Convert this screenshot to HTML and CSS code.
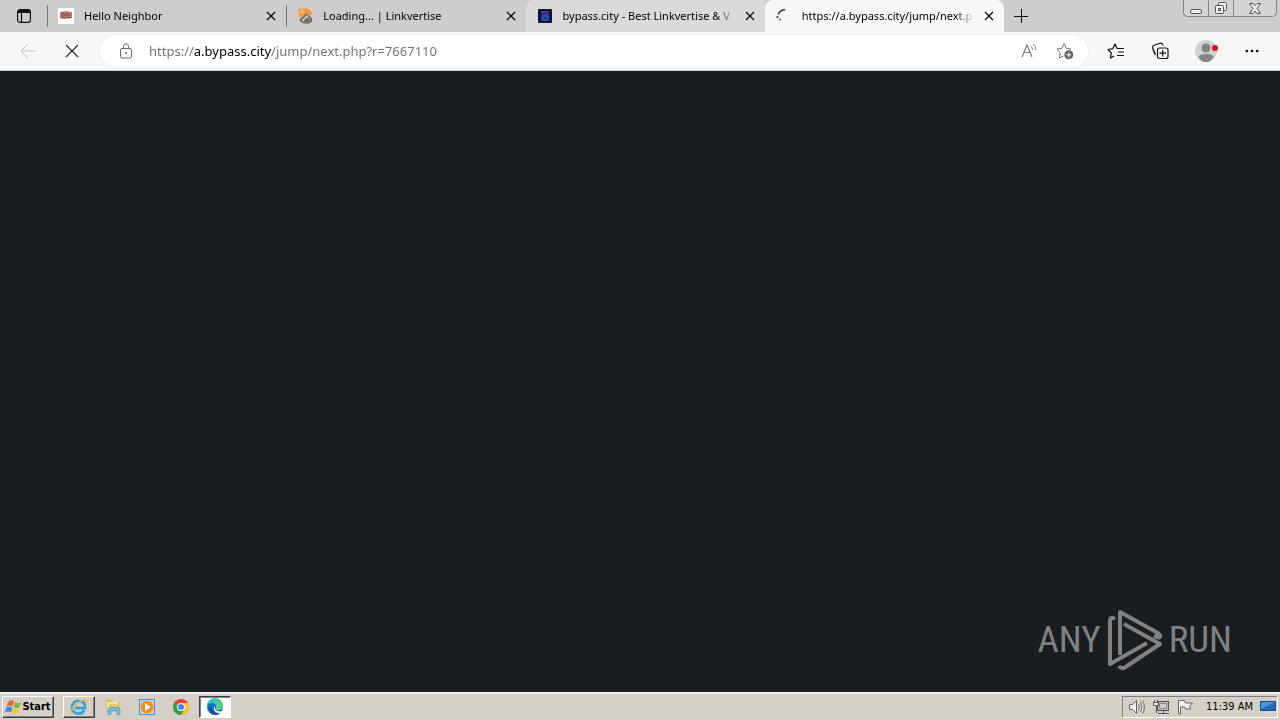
FILE: index.html
```html
<!DOCTYPE html>
<html lang="en">
<head>
<meta charset="utf-8">
<title>Browser on desktop</title>
<link rel="stylesheet" href="styles.css">
</head>
<body>
<header class="tabstrip">
  <button class="tab-actions" aria-label="Tab actions">
    <svg width="16" height="16" viewBox="0 0 16 16"><rect x="1.6" y="1.6" width="12.8" height="12.8" rx="2.4" fill="none" stroke="#111" stroke-width="1.2"/><path d="M1.5 5V4Q1.5 1.5 4 1.5h8q2.500 0 2.500 2.500v1z" fill="#111"/><path d="M5.500 5v9" stroke="#111" stroke-width="1.200"/></svg>
  </button>
  <nav class="tabs" aria-label="Tabs">
    <div class="tab divided">
      <svg class="favicon" width="16" height="16" viewBox="0 0 16 16"><rect width="16" height="16" fill="#fff"/><path d="M2 4l6-1 6 1v6l-6 1-6-1z" fill="#c48379"/><path d="M3 5h3v2H4v2h3M8 5h2v3H8zM12 5v3M9 9.500h4" fill="none" stroke="#8a4a48"/><path d="M3 10h4M6 7h2" stroke="#66707a"/></svg>
      <a class="title" href="#">Hello Neighbor</a>
      <button class="close" aria-label="Close tab"><svg width="10" height="10" viewBox="0 0 10 10"><path d="M1 1l8 8M9 1L1 9" stroke="#111" stroke-width="1.400"/></svg></button>
    </div>
    <div class="tab divided">
      <svg class="favicon" width="16" height="16" viewBox="0 0 16 16"><path d="M1 1l6-.5 5 .5 3 4-2 3-4-3-6 5-1-3z" fill="#f5913b"/><path d="M2 2l4-1 2 3-4 3z" fill="#ffb35f"/><path d="M2 12l7-7 6 5v4l-4 2-6-1z" fill="#77746c"/><path d="M5 13l5-5 1 2" stroke="#d9d6ce" stroke-width="1.200" fill="none"/></svg>
      <a class="title" href="#">Loading... | Linkvertise</a>
      <button class="close" aria-label="Close tab"><svg width="10" height="10" viewBox="0 0 10 10"><path d="M1 1l8 8M9 1L1 9" stroke="#111" stroke-width="1.400"/></svg></button>
    </div>
    <div class="tab hovered">
      <svg class="favicon" width="16" height="16" viewBox="0 0 16 16"><rect x="1" y="1" width="14" height="14" rx="1" fill="#11152f"/><path d="M4 3h7l1 4H5z" fill="#4a35a0"/><path d="M5 7h6q3 3 0 6H6l-2-2z" fill="#244eb5"/><path d="M6 5.500h3M7 10h3" stroke="#11152f"/></svg>
      <a class="title" href="#">bypass.city - Best Linkvertise &amp; V</a>
      <button class="close" aria-label="Close tab"><svg width="10" height="10" viewBox="0 0 10 10"><path d="M1 1l8 8M9 1L1 9" stroke="#111" stroke-width="1.400"/></svg></button>
    </div>
    <div class="tab active">
      <svg class="favicon" width="16" height="16" viewBox="0 0 16 16"><path d="M9 1.800Q4 2 2.200 6.500" fill="none" stroke="#555" stroke-width="2"/><path d="M1.500 8v2M3.500 11l1 1" fill="none" stroke="#555" stroke-width="2"/></svg>
      <a class="title" href="#">https://a.bypass.city/jump/next.p</a>
      <button class="close" aria-label="Close tab"><svg width="10" height="10" viewBox="0 0 10 10"><path d="M1 1l8 8M9 1L1 9" stroke="#111" stroke-width="1.400"/></svg></button>
    </div>
  </nav>
  <button class="new-tab" aria-label="New tab"><svg width="14" height="14" viewBox="0 0 14 14"><path d="M0 7.500h14M7.500 0v14" stroke="#111"/></svg></button>
  <div class="window-controls">
    <button aria-label="Minimize"><svg width="14" height="14" viewBox="0 0 14 14"><rect x="1.500" y="8.500" width="11" height="4" rx="1.500" fill="#eee" stroke="#555"/></svg></button>
    <button aria-label="Restore"><svg width="14" height="14" viewBox="0 0 14 14"><rect x="4.500" y="1.500" width="8" height="8" rx="1" fill="#eee" stroke="#555"/><rect x="1.500" y="4.500" width="8" height="8" rx="1" fill="#eee" stroke="#555"/><rect x="4.500" y="7.500" width="2" height="2" fill="#ccc" stroke="#555"/></svg></button>
    <button class="wide" aria-label="Close window"><svg width="14" height="14" viewBox="0 0 14 14"><path d="M1.500 2.500h3.500L7 4.800 9 2.500h3.500L9 7.500l3.500 5H9L7 10l-2 2.500H1.500L5 7.500z" fill="#eee" stroke="#555"/></svg></button>
  </div>
</header>

<div class="toolbar">
  <button class="tool" aria-label="Back" disabled><svg width="16" height="16" viewBox="0 0 16 16"><path d="M16 8H1M8 1L1 8l7 7" fill="none" stroke="#c4c4c4"/></svg></button>
  <button class="tool" aria-label="Stop"><svg width="14" height="14" viewBox="0 0 14 14"><path d="M1 1l12 12M13 1L1 13" stroke="#222" stroke-width="1.100"/></svg></button>
  <form class="address">
    <svg width="14" height="16" viewBox="0 0 14 16"><rect x="1.500" y="5.500" width="11" height="9.500" rx="1.500" fill="none" stroke="#666"/><path d="M4.500 5.500V3.500Q4.500.8 7 .8t2.500 2.700v2" fill="none" stroke="#666"/><circle cx="7" cy="10" r="1" fill="#666"/></svg>
    <input class="url" type="text" aria-label="Address" value="https://a.bypass.city/jump/next.php?r=7667110">
    <button type="button" class="inline-tool" aria-label="Read aloud"><svg width="18" height="16" viewBox="0 0 18 16"><path d="M2 14L7 2l5 12M4 9.500h6" fill="none" stroke="#777" stroke-width="1.100"/><path d="M10.500 3q2 1.500 2 4M13 1q3 2 3 6" fill="none" stroke="#777"/></svg></button>
    <button type="button" class="inline-tool" aria-label="Add to favorites"><svg width="18" height="18" viewBox="0 0 18 18"><path d="M7.500 14l-4 2 .7-5L1 7l4.800-.7L8 1.500l2.300 4.800L15 7l-1 1" fill="none" stroke="#777" stroke-linejoin="round"/><circle cx="12.800" cy="12.800" r="4.500" fill="#666"/><path d="M10.300 12.800h5M12.800 10.300v5" stroke="#fff"/></svg></button>
  </form>
  <button class="tool" aria-label="Favorites"><svg width="18" height="18" viewBox="0 0 18 18"><path d="M7 14l-3.500 2 .7-5L1 7.500l4.800-.8L8 2l2 4.500h7" fill="none" stroke="#111" stroke-width="1.200" stroke-linejoin="round"/><path d="M11 10h6M10 13.500h7" stroke="#111" stroke-width="1.200"/></svg></button>
  <button class="tool" aria-label="Collections"><svg width="18" height="18" viewBox="0 0 18 18"><path d="M4.500 13L1.700 6Q1 4 3 3.300l6-2q2-.7 2.800 1.300l.4 1" fill="none" stroke="#111" stroke-width="1.200"/><path d="M4 12Q2 10 2.200 7" fill="none" stroke="#111"/><rect x="6.500" y="6" width="10.500" height="10.500" rx="2" fill="#f7f7f7" stroke="#111" stroke-width="1.200"/><path d="M8.500 11.200h6.500M11.700 8v6.500" stroke="#111" stroke-width="1.200"/></svg></button>
  <button class="tool roomy" aria-label="Profile"><svg width="24" height="24" viewBox="0 0 24 24"><circle cx="12" cy="12" r="11" fill="#d0d0ce"/><circle cx="12" cy="9" r="4.500" fill="#858585"/><path d="M4.500 18q1-3 7.500-3t7.500 3q-2 5-7.500 5t-7.500-5z" fill="#858585"/><circle cx="21" cy="9" r="3" fill="#e00b1c"/></svg></button>
  <button class="tool roomy" aria-label="Settings and more"><svg width="14" height="4" viewBox="0 0 14 4"><circle cx="1.800" cy="2" r="1.300"/><circle cx="7" cy="2" r="1.300"/><circle cx="12.200" cy="2" r="1.300"/></svg></button>
</div>

<main class="page">
  <div class="brand">
    <span>ANY</span>
    <svg width="56" height="64" viewBox="0 0 56 64"><g fill="none" stroke="#7f8082" stroke-width="4" stroke-linejoin="round"><path d="M8 11Q3 8 3 13V56L40 35"/><path d="M13 47V4L51 25q4 3 1 4.500-2 0-5-2"/><path d="M17 16L53 36 17 60q-3 1-5-2"/></g></svg>
    <span>RUN</span>
  </div>
</main>

<footer class="taskbar">
  <button class="start"><svg width="17" height="16" viewBox="0 0 17 16"><path d="M3 3q3-3 6-.5L7.500 7.500Q4.500 5.500 1.500 7.500z" fill="#e66534"/><path d="M10 3q3 2 6 0l-1.500 5q-3 2-6-.5z" fill="#80b83c"/><path d="M1.200 8.500q3-2 6 .2L6 13.500q-3-2-6 0z" fill="#4389cf"/><path d="M8.200 9q3 2 6 0L13 14q-3 2-6 0z" fill="#f5c534"/></svg>Start</button>
  <nav class="launchers" aria-label="Taskbar">
    <button class="task raised" aria-label="Internet Explorer"><svg width="18" height="18" viewBox="0 0 18 18"><path d="M14.500 12Q12.500 15.500 9 15.500A6.300 6.300 0 119 3q6 0 6.200 7H5" fill="none" stroke="#38a5df" stroke-width="2.800"/><path d="M2 16Q-1 13 6 7T16 2q2 1-.5 4" fill="none" stroke="#e8bd42" stroke-width="1.500"/></svg></button>
    <button class="task" aria-label="File Explorer"><svg width="18" height="18" viewBox="0 0 18 18"><path d="M2 2h5l1 2h8v10H2z" fill="#e1bd58"/><path d="M3 4h11v9H3z" fill="#f6e69d"/><path d="M5 6h11v7H5z" fill="#dfc971"/><path d="M4 16.500v-5q0-2 2-2h8q2 0 2 2v5h-3v-4H7v4z" fill="#75bce0" stroke="#4993bd" stroke-width=".6"/></svg></button>
    <button class="task" aria-label="Media Player"><svg width="18" height="18" viewBox="0 0 18 18"><rect x="1.500" y="1.500" width="15" height="15" fill="#b9d5e9" stroke="#568cbb"/><circle cx="9" cy="9" r="6.300" fill="#ef8c20"/><path d="M7 5l5.500 4L7 13z" fill="#fff"/></svg></button>
    <button class="task" aria-label="Chrome"><svg width="18" height="18" viewBox="0 0 18 18"><circle cx="9" cy="9" r="8" fill="#e64035"/><path d="M2.100 5A8 8 0 009 17l3.500-6-3.500-2z" fill="#31a350"/><path d="M9 17a8 8 0 007-12H9l3.500 6z" fill="#f7c52d"/><circle cx="9" cy="9" r="4" fill="#fff"/><circle cx="9" cy="9" r="3" fill="#4285e8"/></svg></button>
    <button class="task pressed" aria-label="Edge"><svg width="18" height="18" viewBox="0 0 18 18"><circle cx="9" cy="9" r="8" fill="#1878c6"/><path d="M1 8a8 8 0 0116 0q0 4-5 4-3 0-2-2 1-5-4-5-4 0-5 3z" fill="#35c2c4"/><path d="M10 1.200Q17 3 17 8q0 4-5 4-3 0-2-2 2-4-2-5z" fill="#53cf83"/><path d="M6 7q-1 9 9 6-2 4-6 4Q3 16 3 11q0-3 3-4z" fill="#1555a2"/><path d="M9 8q-2 6 8 5.500v1q-8 2-9-3-.5-2 1-3.500z" fill="#fff"/></svg></button>
  </nav>
  <div class="tray">
    <svg width="18" height="16" viewBox="0 0 18 16"><path d="M1.500 5.500h3l4-4v13l-4-4h-3z" fill="#eee" stroke="#666"/><path d="M10.500 5q2 3 0 6M12.500 3q3 5 0 10M14.500 1.500q4 6.500 0 13" fill="none" stroke="#777"/></svg>
    <svg width="17" height="16" viewBox="0 0 17 16"><rect x="4.500" y="2.500" width="11" height="9" fill="#bbb" stroke="#555"/><path d="M6.500 4.500h7v5h-7z" fill="#ccc" stroke="#888"/><path d="M5 14.500h11M10.500 12v2" stroke="#555"/><path d="M.5 3.500h5v3h-5zM1.500 1v3M4.500 1v3M3.500 7v7" fill="#eee" stroke="#555"/></svg>
    <svg width="17" height="16" viewBox="0 0 17 16"><path d="M1.500 1.500h6l1 2.500h7l-3 3 1 3H8.500l-1-2h-4v7h-2z" fill="#f1f1f1" stroke="#666"/></svg>
    <time>11:39 AM</time>
    <button class="desktop" aria-label="Show desktop"><svg width="16" height="14" viewBox="0 0 16 14"><path d="M.5 1.500h15v9H.5z" fill="#2469b8" stroke="#174a8b"/><path d="M1 2h14L1 9z" fill="#4b92da"/><path d="M5 12.500h8" stroke="#cfd8e2" stroke-width="2"/></svg></button>
  </div>
</footer>
</body>
</html>
```

FILE: styles.css
```css
* { box-sizing: border-box; }
body {
  margin: 0;
  min-height: 100vh;
  display: flex;
  flex-direction: column;
  background: #1a1d20;
  font-family: "Noto Sans", "Open Sans", sans-serif;
  font-size: 11px;
  color: #000;
}
button {
  display: flex;
  align-items: center;
  justify-content: center;
  flex: none;
  padding: 0;
  border: 0;
  background: none;
  font: inherit;
  color: inherit;
}
svg { display: block; flex: none; }

.tabstrip { display: flex; height: 32px; background: #cdcdcd; }
.tab-actions { width: 47px; }
.tabs { display: flex; flex: 0 1 957px; min-width: 0; }
.tab {
  display: flex;
  align-items: center;
  flex: 1 1 0;
  min-width: 0;
  padding: 0 7px 0 10px;
  border-left: 1px solid transparent;
}
.divided {
  border-image: linear-gradient(transparent 6px, #777 6px, #777 26px, transparent 26px) 1;
  border-width: 0 0 0 1px;
}
.hovered { background: #dadada; border-radius: 8px 0 0 0; }
.active { background: #f7f7f7; border-radius: 8px 8px 0 0; }
.title {
  flex: 1;
  min-width: 0;
  margin: 0 6px 0 10px;
  overflow: hidden;
  white-space: nowrap;
  color: #000;
  text-decoration: none;
  line-height: 20px;
  mask-image: linear-gradient(to right, #000 calc(100% - 20px), transparent);
}
.close { width: 16px; height: 16px; }
.new-tab { width: 34px; }
.window-controls {
  display: flex;
  align-self: flex-start;
  height: 17px;
  margin: 0 3px 0 auto;
  border: 1px solid #858585;
  border-top: 0;
  border-radius: 0 0 5px 5px;
  background: #d3d3d3;
}
.window-controls button { width: 25px; border-right: 1px solid #858585; }
.window-controls .wide { width: 42px; border-right: 0; }

.toolbar {
  display: flex;
  align-items: center;
  height: 39px;
  padding: 0 6px;
  background: #f7f7f7;
  border-bottom: 1px solid #c8c8c8;
}
.tool { width: 44px; height: 32px; }
.roomy { margin-left: 2px; }
.address {
  display: flex;
  align-items: center;
  flex: 1;
  min-width: 0;
  height: 32px;
  margin: 0 6px;
  padding: 0 5px 0 19px;
  border-radius: 16px;
  background: #fff;
  box-shadow: 0 0 2px #ddd;
}
.url {
  flex: 1;
  min-width: 0;
  margin-left: 16px;
  padding: 0;
  border: 0;
  outline: 0;
  font: 13px/20px "Noto Sans", "Open Sans", sans-serif;
  color: transparent;
  background: linear-gradient(to right, #707070 45px, #000 45px, #000 122px, #707070 122px);
  background-clip: text;
}
.inline-tool { width: 36px; height: 24px; }

.page {
  display: flex;
  flex: 1;
  align-items: flex-end;
  justify-content: flex-end;
  padding: 0 48px 20px;
}
.brand {
  display: flex;
  align-items: center;
  gap: 6px;
  color: #7f8082;
  font: 37px/56px "Roboto Condensed", "Open Sans Condensed", "Noto Sans CJK JP", sans-serif;
}

.taskbar {
  display: flex;
  align-items: center;
  height: 28px;
  padding: 2px;
  background: #d4d0c8;
  border-top: 2px solid #f1efeb;
  font: 11px/16px "DejaVu Sans Condensed", sans-serif;
}
.start, .raised {
  border: 1px solid;
  border-color: #fff #404040 #404040 #fff;
  box-shadow: inset -1px -1px #808080;
}
.start { width: 52px; height: 22px; font-weight: bold; }
.launchers { display: flex; gap: 2px; margin-left: 9px; }
.task { width: 32px; height: 22px; }
.pressed {
  background: #fff;
  border: 1px solid;
  border-color: #404040 #fff #fff #404040;
  box-shadow: inset 1px 1px #808080;
}
.tray {
  display: flex;
  align-items: center;
  height: 22px;
  margin-left: auto;
  padding: 0 1px 0 5px;
  gap: 7px;
  border: 1px solid;
  border-color: #808080 #fff #fff #808080;
}
time { margin-left: 5px; }
```
